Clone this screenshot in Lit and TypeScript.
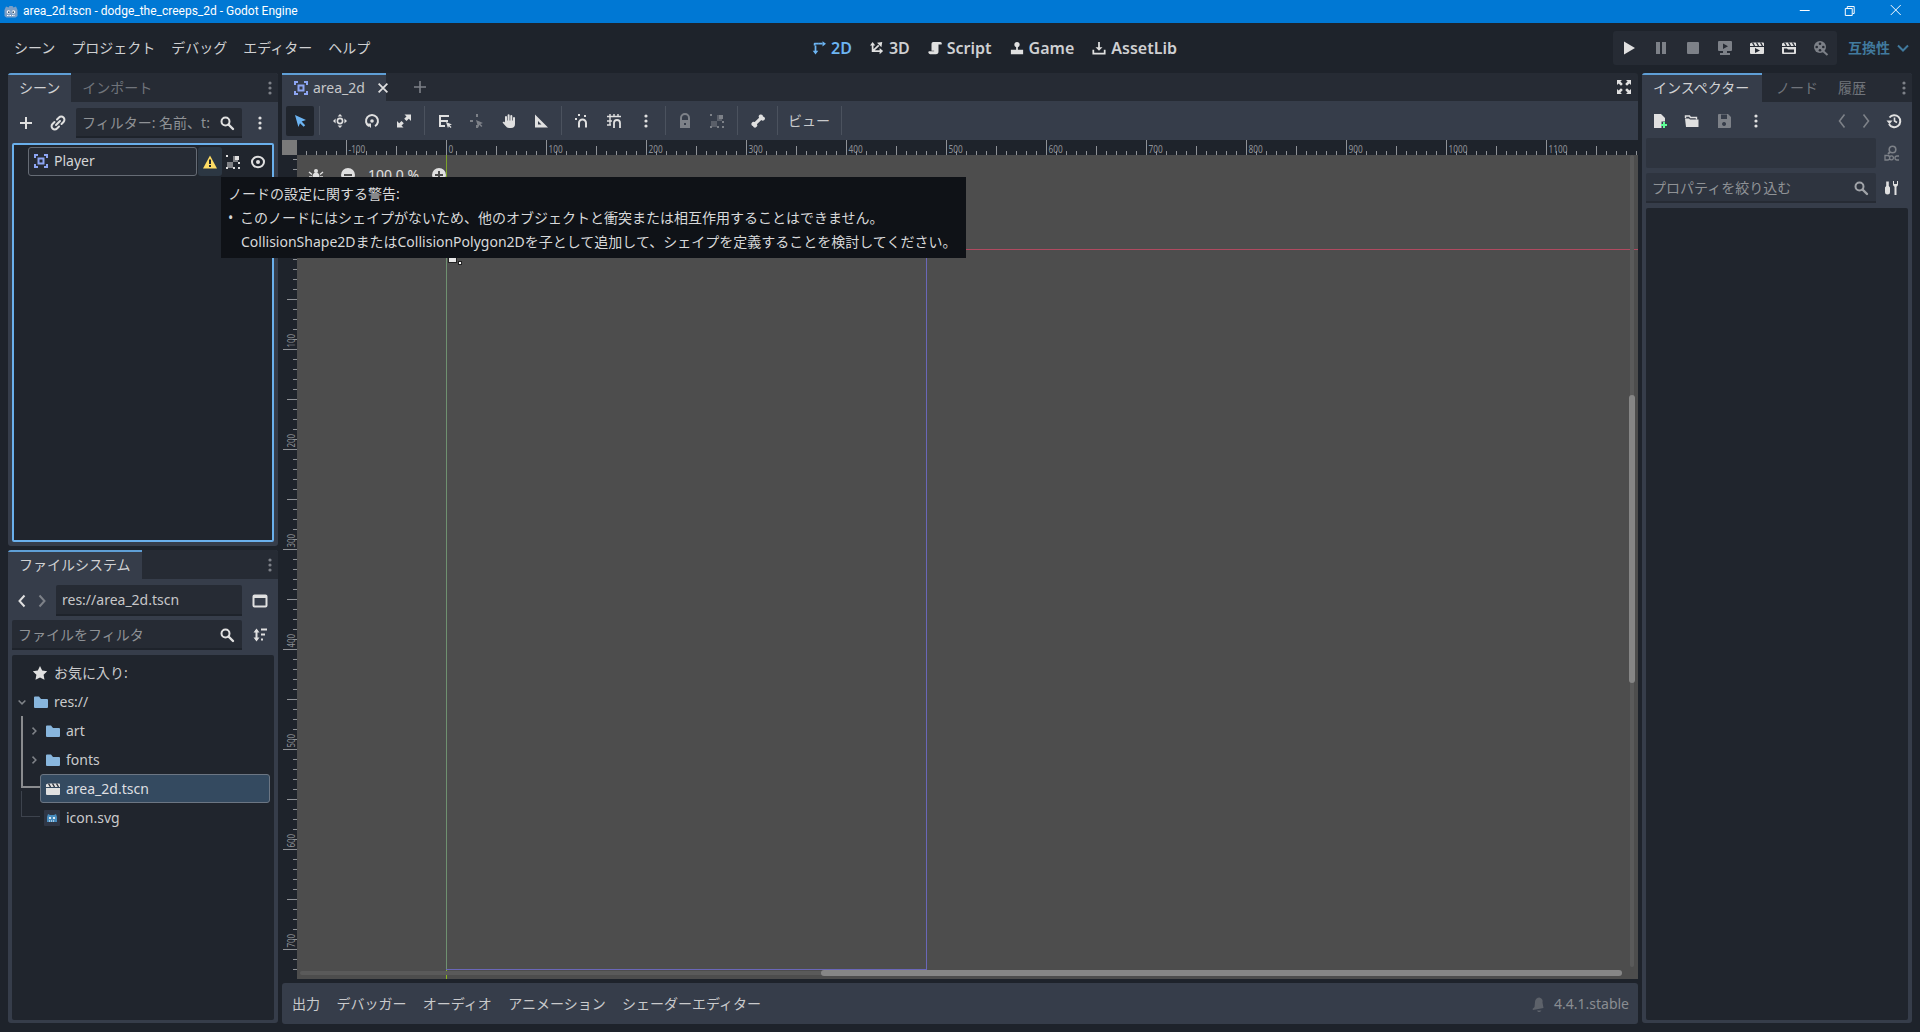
import { LitElement, html, css, svg } from 'lit';
import { customElement } from 'lit/decorators.js';

const W = '#e0e0e0';
const DIM = '#7d8188';
const BLUE = '#6cb4f2';
const AREA = '#8da5f3';

const dots = (c = W) => svg`<circle cx="8" cy="3" r="1.6" fill=${c}/><circle cx="8" cy="8" r="1.6" fill=${c}/><circle cx="8" cy="13" r="1.6" fill=${c}/>`;
const glass = (c = W) => svg`<circle cx="6.5" cy="6.5" r="4" fill="none" stroke=${c} stroke-width="2"/><path d="M9.5 9.5l4.5 4.5" stroke=${c} stroke-width="2.4" stroke-linecap="round"/>`;
const folder = (c = '#88b6dd') => svg`<path d="M1 3.5a1 1 0 0 1 1-1h4l2 2.5h6a1 1 0 0 1 1 1v7a1 1 0 0 1-1 1H2a1 1 0 0 1-1-1z" fill=${c}/>`;
const clap = (c = W) => svg`<path d="M1 3.5l2-1h11a1 1 0 0 1 1 1V6H1z" fill=${c}/><path d="M3.5 2.5l2 3.5M7.5 2.5l2 3.5M11.5 2.5l2 3.5" stroke="#2a303a" stroke-width="1.4"/><path d="M1 7h14v6a1 1 0 0 1-1 1H2a1 1 0 0 1-1-1z" fill=${c}/>`;
const pixels = (c = W) => svg`<path d="M8 2h5v6H8zM2 8h6v6H2z" fill=${c} opacity=".5"/><path d="M1 1h2v2H1zM10 2h4v4h-4zM13 8h2v2h-2zM1 13h2v2H1zM8 13h2v2H8zM13 13h2v2h-2z" fill=${c}/>`;

const ICONS: Record<string, unknown> = {
  area: svg`<path d="M1 1h4v2H3v2H1zM11 1h4v4h-2V3h-2zM1 11h2v2h2v2H1zM13 11h2v4h-4v-2h2z" fill=${AREA}/><path d="M5.5 5.5h5v5h-5z" fill="none" stroke=${AREA} stroke-width="2"/>`,
  close: svg`<path d="M3 3l10 10M13 3L3 13" stroke=${W} stroke-width="2"/>`,
  plus: svg`<path d="M8 2v12M2 8h12" stroke=${W} stroke-width="2"/>`,
  plusdim: svg`<path d="M8 2v12M2 8h12" stroke=${DIM} stroke-width="1.6"/>`,
  link: svg`<path d="M7 4.5l2-2a2.8 2.8 0 0 1 4.5 4.5l-2 2M9 11.5l-2 2A2.8 2.8 0 0 1 2.5 9l2-2M6 10l4-4" fill="none" stroke=${W} stroke-width="2" stroke-linecap="round"/>`,
  dots: dots(),
  dotsdim: dots(DIM),
  search: glass(),
  searchdim: glass('#a0a3a8'),
  warn: svg`<path d="M8 1.5L15 14.5H1z" fill="#ffdd65"/><path d="M7 5.5h2V10H7zM7 11h2v2H7z" fill="#23282f"/>`,
  group: pixels(),
  groupdim: pixels(DIM),
  eye: svg`<ellipse cx="8" cy="8" rx="6" ry="5.2" fill="none" stroke=${W} stroke-width="2"/><circle cx="8" cy="8" r="2" fill=${W}/>`,
  select: svg`<path d="M3 2l11 5-4.400 1.600 3.600 3.600-1.600 1.600-3.600-3.600L6.400 14z" fill=${BLUE}/>`,
  move: svg`<path d="M8 1L5.600 3.600h4.800zM8 15l-2.400-2.600h4.800zM1 8l2.600-2.400v4.800zM15 8l-2.600-2.400v4.800z" fill=${W}/><circle cx="8" cy="8" r="2.600" fill="none" stroke=${W} stroke-width="1.600"/>`,
  rotate: svg`<path d="M5 13.200A6 6 0 1 1 11 13.200" fill="none" stroke=${W} stroke-width="2"/><path d="M2 10.500h5v4.500z" fill=${W}/><circle cx="8" cy="8" r="1.800" fill=${W}/>`,
  scale: svg`<path d="M8.500 1.500H15v6.500l-2.200-2.200-2.300 2.300-2.300-2.300 2.300-2.300zM7.500 14.500H1V8l2.200 2.200 2.300-2.300 2.300 2.300-2.300 2.300z" fill=${W}/>`,
  list: svg`<path d="M2 2h10v2H4v3h7v2H4v3h4v2H2z" fill=${W}/><path d="M9 9l6 2.500-2.300.8 1.800 1.800-.9.9-1.800-1.800-.8 2z" fill=${W}/>`,
  smart: svg`<path d="M7 1h2v3H7zM7 12h2v3H7zM1 7h3v2H1z" fill=${DIM}/><path d="M7 7l7 3-2.600 1 2 2-1.100 1.100-2-2-1 2.600z" fill=${DIM}/>`,
  hand: svg`<path d="M5 8.500V4M7.600 7.500V2.200M10.300 7.500V3M13 8.500V5" stroke=${W} stroke-width="2" stroke-linecap="round"/><path d="M4 7.500h10V11a4 4 0 0 1-4 4H8a4 4 0 0 1-3.400-1.900L1.500 9.500 3 8.500 4 9.500z" fill=${W}/>`,
  ruler: svg`<path fill-rule="evenodd" d="M2 1.500L15 14.500H2zM5 8v3.500h3.500z" fill=${W}/>`,
  snap: svg`<path d="M5 14.500V10a3.500 3.500 0 0 1 7 0v4.500" fill="none" stroke=${W} stroke-width="2"/><path d="M1 5h2v2H1zM4 1h2v2H4zM10 2h2v2h-2z" fill=${W}/>`,
  grid: svg`<path d="M4 1v11M8 1v3M12 1v3M1 3.500h14M1 8h5M1 12h4" stroke=${W} stroke-width="1.400" fill="none"/><path d="M8 15v-5a2.800 2.800 0 0 1 6 0v5" fill="none" stroke=${W} stroke-width="1.800"/>`,
  lock: svg`<path d="M4 7V5a4 4 0 0 1 8 0v2" fill="none" stroke=${DIM} stroke-width="2"/><path fill-rule="evenodd" d="M3 7h10v8H3zM7 10v2h2v-2z" fill=${DIM}/>`,
  bone: svg`<path d="M11 1.500a2 2 0 0 1 2 2 2 2 0 0 1 1 3.700 2 2 0 0 1-2.700-.3L6.900 11.300a2 2 0 0 1-.6 2.800 2 2 0 0 1-3.300-1.100 2 2 0 0 1-1.100-3.300 2 2 0 0 1 2.800-.6L9.100 4.700A2 2 0 0 1 11 1.500z" fill=${W}/>`,
  expand: svg`<path d="M1 1h5L4.400 2.600l2.400 2.400-1.800 1.800-2.400-2.400L1 6zM15 1v5l-1.600-1.600-2.400 2.400-1.800-1.800 2.400-2.400L10 1zM1 15v-5l1.600 1.600 2.400-2.400 1.800 1.800-2.400 2.400L6 15zM15 15h-5l1.600-1.600-2.400-2.400 1.800-1.800 2.400 2.400L15 10z" fill=${W}/>`,
  m2d: svg`<path d="M4 5v7M7 3h5" stroke=${BLUE} stroke-width="2" fill="none"/><path d="M4 4h3V2H3a1 1 0 0 0-1 1v2h2z" fill=${BLUE}/><path d="M.8 11h6.400L4 15.500zM12 .2l4 3-4 3z" fill=${BLUE}/>`,
  m3d: svg`<path d="M3 4v7.500h9M3 11.500L10 5" stroke=${W} stroke-width="2" fill="none"/><path d="M0 5l3-4 3 4zM11 8l4 3.500-4 3.500zM8 2l6-1-1 6z" fill=${W}/>`,
  script: svg`<path d="M6 1h8a2 2 0 0 1 1.500 3H12v8a3 3 0 0 1-3 3H2.500a2 2 0 0 1-1.500-3.400h6V11H4V3a2 2 0 0 1 2-2z" fill=${W}/>`,
  game: svg`<circle cx="8" cy="4" r="3" fill=${W}/><path d="M7 6h2v5H7zM1 10h14v5H1z" fill=${W}/>`,
  asset: svg`<path d="M7 1h2v6h3l-4 4-4-4h3z" fill=${W}/><path d="M1.500 10v4.500h13V10" fill="none" stroke=${W} stroke-width="2"/>`,
  play: svg`<path d="M3 1.500l11 6.500-11 6.500z" fill=${W}/>`,
  pause: svg`<path d="M3 2h4v12H3zM9 2h4v12H9z" fill=${DIM}/>`,
  stop: svg`<rect x="2" y="2" width="12" height="12" rx="1" fill=${DIM}/>`,
  remote: svg`<path fill-rule="evenodd" d="M1 2a1 1 0 0 1 1-1h12a1 1 0 0 1 1 1v8a1 1 0 0 1-1 1h-4v2h3v2H3v-2h3v-2H2a1 1 0 0 1-1-1zM6 3.500v5.500l5-2.700z" fill=${DIM}/>`,
  playscene: svg`${clap()}<path d="M6 8l5 2.500L6 13z" fill="#262b34"/>`,
  customscene: svg`${clap()}<path d="M3 8.500h3l1 1h6v3H3z" fill="#262b34"/>`,
  movie: svg`<circle cx="7" cy="7" r="6" fill=${DIM}/><circle cx="7" cy="3.700" r="1.300" fill="#262b34"/><circle cx="7" cy="10.300" r="1.300" fill="#262b34"/><circle cx="3.700" cy="7" r="1.300" fill="#262b34"/><circle cx="10.300" cy="7" r="1.300" fill="#262b34"/><path d="M10 11l4.500 4" stroke=${DIM} stroke-width="2"/>`,
  chevdown: svg`<path d="M3 5.500l5 5 5-5" fill="none" stroke="#417a9e" stroke-width="2"/>`,
  left: svg`<path d="M10.500 2.500L5.500 8l5 5.500" fill="none" stroke=${W} stroke-width="2"/>`,
  right: svg`<path d="M5.500 2.500l5 5.500-5 5.500" fill="none" stroke=${DIM} stroke-width="2"/>`,
  leftdim: svg`<path d="M10.500 1.500L5.500 8l5 6.500" fill="none" stroke=${DIM} stroke-width="1.600"/>`,
  rightdim: svg`<path d="M5.500 1.500l5 6.500-5 6.500" fill="none" stroke=${DIM} stroke-width="1.600"/>`,
  layout: svg`<rect x="1.500" y="2.500" width="13" height="11" rx="1" fill="none" stroke=${W} stroke-width="2"/><path d="M1.500 2.500h13V5h-13z" fill=${W}/>`,
  sort: svg`<path d="M4.500 3v10" stroke=${W} stroke-width="2"/><path d="M1.500 5.500l3-4 3 4zM1.500 10.500l3 4 3-4z" fill=${W}/><path d="M9 2.500h6M9 7.500h4M9 12.500h2" stroke=${W} stroke-width="1.800"/>`,
  star: svg`<path d="M8 1l2.200 4.600 5 .7-3.600 3.500.9 5L8 12.400l-4.500 2.400.9-5L.8 6.300l5-.7z" fill=${W}/>`,
  folder: folder(),
  downarrow: svg`<path d="M3.500 6l4.500 4.500L12.500 6" fill="none" stroke="#7f8388" stroke-width="2"/>`,
  rightarrow: svg`<path d="M6 3.500L10.500 8 6 12.500" fill="none" stroke="#7f8388" stroke-width="2"/>`,
  scene: clap(),
  godot: svg`<rect width="16" height="16" rx="1" fill="#2f3645"/><path d="M3 7l1-3 2 1h4l2-1 1 3v5H3z" fill="#478cbf"/><circle cx="6" cy="8" r="1.100" fill="#fff"/><circle cx="10" cy="8" r="1.100" fill="#fff"/><path d="M5 11h6" stroke="#fff" stroke-dasharray="1 1"/>`,
  wingodot: svg`<path d="M1.500 6L3 2.500l2.500 1L6.500 2h3l1 1.500 2.500-1L14.500 6v6l-2 1.500h-9L1.500 12z" fill="#7b9fc7"/><circle cx="5.500" cy="8" r="1.800" fill="#fff"/><circle cx="10.500" cy="8" r="1.800" fill="#fff"/><circle cx="5.800" cy="8.200" r=".9" fill="#33506e"/><circle cx="10.200" cy="8.200" r=".9" fill="#33506e"/><path d="M4 11.500h8" stroke="#fff" stroke-dasharray="1.500 1"/>`,
  newres: svg`<path d="M2 1h7l4 4v3.500H9.500V12H2zM2 12h7.500v3H2z" fill=${W}/><path d="M12 9v6M9 12h6" stroke="#5fff97" stroke-width="2"/>`,
  open: svg`<path d="M1.500 5V3h4l1 1.500h6v2" fill="none" stroke=${W} stroke-width="1.400"/><path d="M1 5.500L2 14h12.500V6.500H6L5 5.500z" fill=${W}/>`,
  save: svg`<path fill-rule="evenodd" d="M2 2a1 1 0 0 1 1-1h9l3 3v10a1 1 0 0 1-1 1H2zM5 1.500V6h6V1.500zM8 9a2 2 0 1 0 .1 0z" fill=${DIM}/>`,
  hist: svg`<path d="M3.500 4.500A6 6 0 1 1 3 11" fill="none" stroke=${W} stroke-width="2"/><path d="M.5 7.500h6l-3 3.800z" fill=${W}/><path d="M8.500 4.500V8l2.500 1.500" fill="none" stroke=${W} stroke-width="1.600"/>`,
  doc: svg`<circle cx="8.500" cy="4.500" r="3.300" fill="none" stroke=${DIM} stroke-width="1.600"/><path d="M6 7L4 9" stroke=${DIM} stroke-width="1.800"/><path d="M1 10.500h2.500a2 2 0 0 1 0 4.500H1zM7.500 10.800a2 2 0 1 1-.1 0zM15 11h-2a2 2 0 0 0 0 4h2" fill="none" stroke=${DIM} stroke-width="1.300"/>`,
  tools: svg`<path d="M1 7.500l1.200-1.500V1.500h2.600V6L6 7.500V12a2.500 2.500 0 0 1-5 0z" fill=${W}/><path d="M9 1v3.500a2.500 2.500 0 0 0 1.500 2.200V15h2V6.700A2.500 2.500 0 0 0 14 4.500V1h-1v3h-3V1z" fill=${W}/>`,
  bell: svg`<path d="M9.500 1.500a4 4 0 0 1 3 5l1 5.500-10.500 2-.5-1 2-2 .5-5a4.500 4.500 0 0 1 4.500-4.500zM7 14.500h4.500L10 16H8z" fill="#5d626a"/>`,
  bug: svg`<ellipse cx="8" cy="10" rx="3.500" ry="4.500" fill=${W}/><circle cx="8" cy="4" r="2" fill=${W}/><path d="M1 5l3 2.500M15 5l-3 2.500M1 10h3M15 10h-3M2 15l3-2M14 15l-3-2" stroke=${W} stroke-width="1.400"/>`,
  minus: svg`<circle cx="8" cy="8" r="7" fill=${W}/><path d="M4 7h8v2H4z" fill="#4d4d4d"/>`,
  zoomplus: svg`<circle cx="8" cy="8" r="7" fill=${W}/><path d="M7 4h2v3h3v2H9v3H7V9H4V7h3z" fill="#4d4d4d"/>`,
};

const icon = (name: string, size = 16) =>
  html`<svg class="icon" width=${size} height=${size} viewBox="0 0 16 16">${ICONS[name]}</svg>`;

const btn = (name: string, size = 16) => html`<span class="btn">${icon(name, size)}</span>`;

@customElement('app-root')
export class AppRoot extends LitElement {
  static styles = css`
    :host {
      display: block;
      width: 1920px;
      height: 1032px;
      overflow: hidden;
      background: #1e232b;
      color: #d4d5d7;
      font-family: 'Noto Sans', 'Noto Sans CJK JP', sans-serif;
      font-size: 14px;
      line-height: 20px;
      position: relative;
    }
    .icon { display: block; flex: none; }
    .btn { display: flex; flex: none; width: 32px; align-items: center; justify-content: center; }

    .titlebar { height: 23px; background: #0078d4; color: #fff; display: flex; align-items: center; font-family: Roboto, 'Noto Sans', sans-serif; font-size: 12px; padding-left: 3px; }
    .titlebar .name { margin-left: 4px; line-height: 23px; }
    .winctl { margin-left: auto; display: flex; height: 23px; padding-right: 2px; }
    .winctl svg { display: block; width: 45.5px; height: 23px; }

    .menubar { height: 50px; display: flex; align-items: center; }
    .menus { width: 812px; flex: none; padding-left: 14px; box-sizing: border-box; display: flex; gap: 16px; color: #cfd0d2; }
    .modes { display: flex; gap: 18px; font-weight: 600; font-size: 16px; color: #cfd0d2; }
    .mode { display: flex; align-items: center; gap: 5px; }
    .mode.on { color: #6cb4f2; }
    .runbar { margin-left: auto; width: 224px; height: 34px; background: #262b34; border-radius: 3px; display: flex; align-items: center; }
    .compat { width: 83px; display: flex; align-items: center; padding-left: 11px; box-sizing: border-box; color: #417a9e; font-weight: 600; gap: 5px; }

    .main { display: grid; grid-template-columns: 270px 1356px 270px; gap: 4px; padding: 0 8px; height: 951px; box-sizing: border-box; }
    .col { display: flex; flex-direction: column; min-height: 0; }
    .dock { background: #363d4a; border-radius: 3px; display: flex; flex-direction: column; overflow: hidden; }
    .scene { height: 473px; flex: none; }
    .fs { height: 473px; flex: none; margin-top: 4px; }
    .insp { height: 950px; }

    .tabs { height: 29px; flex: none; background: #262b34; display: flex; color: #70747b; }
    .tab { display: flex; align-items: center; box-sizing: border-box; border-top: 2px solid transparent; padding: 0 11px 2px; }
    .tab.on { background: #363d4a; border-top-color: #5f9fd6; color: #d0d1d3; }
    .tabs .more { margin-left: auto; width: 16px; align-self: center; }

    .row { display: flex; align-items: center; flex: none; }
    .input { background: #262b34; border-bottom: 2px solid #1e232b; box-sizing: border-box; border-radius: 2px 2px 0 0; display: flex; align-items: center; color: #8f9296; padding: 0 7px; overflow: hidden; white-space: nowrap; }
    .input .txt { flex: 1; overflow: hidden; }
    .input .icon { margin-left: 4px; }
    .scene .row { height: 41px; padding: 0 2px; }
    .filter { width: 166px; height: 30px; margin: 1px 2px 0; padding: 2px 7px 0 6px; }
    .tree { background: #20252d; flex: 1; position: relative; }
    .scene .tree { margin: 0 4px 4px; border: 2px solid #6ab0ec; border-radius: 2px; }
    .node { position: absolute; left: 14px; top: 2px; width: 169px; height: 29px; box-sizing: border-box; border: 1px solid #666c75; border-radius: 3px; background: #262b34; display: flex; align-items: center; padding: 0 0 1px 4px; gap: 5px; }
    .nodeicons { position: absolute; left: 184px; top: 2px; height: 29px; display: flex; align-items: center; }
    .warnbtn { width: 24px; height: 29px; background: #2c3743; border-radius: 3px; display: flex; align-items: center; justify-content: center; }
    .nodeicons .g { margin-left: 3px; }
    .nodeicons .e { margin-left: 9px; }

    .fs .nav { padding: 6px 2px 0 4px; height: 31px; box-sizing: content-box; }
    .navbtn { width: 20px; display: flex; justify-content: center; }
    .path { width: 186px; height: 31px; color: #c6c7c9; margin: 0 2px 0 4px; padding: 0 6px; }
    .fs .search { margin: 4px 2px 0 4px; height: 30px; }
    .fsfilter { width: 230px; height: 30px; margin-right: 2px; padding: 2px 7px 0 6px; }
    .fs .tree { margin: 5px 4px 3px; padding-top: 3px; border-radius: 2px; }
    .item { height: 29px; display: flex; align-items: center; white-space: nowrap; color: #c9cacc; position: relative; z-index: 1; }
    .item .icon { margin-right: 5px; }
    .item .slot { width: 12px; flex: none; display: flex; justify-content: center; margin-right: 5px; }
    .item .slot .icon { margin: 0; }
    .i0 { padding-left: 20px; }
    .i0 .icon { margin-right: 6px; }
    .i1 { padding-left: 4px; }
    .i2 { padding-left: 16px; }
    .i3 { padding-left: 32px; }
    .i3 .icon { margin-right: 6px; }
    .item.sel { margin-left: 28px; margin-right: 4px; padding-left: 4px; background: #344a60; border: 1px solid #6c7683; border-radius: 3px; box-sizing: border-box; color: #dedfe1; }
    .line { position: absolute; }
    .l1 { left: 9px; top: 61px; width: 2px; height: 72px; background: #8a8c8f; }
    .l2 { left: 9px; top: 131px; width: 19px; height: 2px; background: #8a8c8f; }
    .l3 { left: 9px; top: 136px; width: 1px; height: 26px; background: #3d434d; }
    .l4 { left: 9px; top: 161px; width: 19px; height: 1px; background: #3d434d; }

    .center { display: flex; flex-direction: column; min-height: 0; }
    .ctabs { height: 28px; flex: none; background: #262b34; border-radius: 3px 3px 0 0; display: flex; align-items: stretch; }
    .ctab { width: 104px; box-sizing: border-box; background: #363d4a; border-top: 2px solid #5f9fd6; display: flex; align-items: center; padding-left: 11px; gap: 4px; color: #c6c7c9; }
    .ctab .x { margin-left: 7px; }
    .addtab { width: 32px; margin-left: 18px; display: flex; align-items: center; justify-content: center; }
    .full { margin-left: auto; width: 24px; display: flex; align-items: center; justify-content: center; margin-right: 2px; }
    .ctools { height: 39px; flex: none; background: #363d4a; display: flex; align-items: center; padding-left: 4px; }
    .selbtn { width: 28px; height: 30px; background: #20252d; border-radius: 2px; display: flex; align-items: center; justify-content: center; flex: none; }
    .sep { width: 1px; height: 29px; background: #4b525e; flex: none; margin: 0 4px; }
    .sep.first { margin-left: 5px; }
    .sep.thin { margin: 0 3px; }
    .view { width: 56px; flex: none; text-align: center; color: #c9cacc; }

    .canvas { height: 839px; flex: none; position: relative; display: grid; grid-template-columns: 15px 1fr; grid-template-rows: 15px 1fr; background: #1e232b; overflow: hidden; }
    .corner { background: #7a7a7a; }
    .ruler { display: block; }
    .ruler text { font-size: 11px; fill: #8e9196; font-family: 'Noto Sans', sans-serif; }
    .vp { background: #4d4d4d; position: relative; overflow: hidden; }
    .vline { position: absolute; width: 1px; }
    .hline { position: absolute; height: 1px; }
    .g1 { left: 149px; top: 0; height: 94px; background: #7ba32a; }
    .g2 { left: 149px; top: 94px; height: 720px; background: #6f9170; }
    .g3 { left: 149px; top: 814px; bottom: 0; background: #8ab820; }
    .b1 { left: 629px; top: 94px; height: 720px; background: #6a67b8; }
    .b2 { left: 149px; top: 814px; width: 481px; background: #6a67b8; }
    .r1 { left: 0; right: 0; top: 94px; background: #b04a60; }
    .zoom { position: absolute; left: 11px; top: 10px; display: flex; align-items: center; color: #e0e0e0; }
    .zoom .pct { width: 75px; text-align: center; }
    .zoom .m { margin-left: 16px; }
    .handle { position: absolute; left: 151px; top: 100px; width: 9px; height: 8px; background: #e8e8e8; border: 1px solid #222; box-sizing: border-box; }
    .handle2 { position: absolute; left: 161px; top: 106px; width: 4px; height: 4px; background: #fff; border: 1px solid #222; box-sizing: border-box; }
    .vtrack { position: absolute; right: 4px; top: 0; bottom: 12px; width: 4px; background: #5a5a5a; border-radius: 2px; }
    .vthumb { position: absolute; left: -1px; width: 6px; top: 240px; height: 288px; background: #868686; border-radius: 3px; }
    .htrack { position: absolute; left: 3px; right: 16px; bottom: 4px; height: 4px; background: #5a5a5a; border-radius: 2px; }
    .hthumb { position: absolute; left: 521px; right: 0; top: -1px; height: 6px; background: #868686; border-radius: 3px; }

    .bottom { height: 41px; margin-top: 4px; flex: none; background: #363d4a; border-radius: 3px; display: flex; align-items: center; padding: 1px 9px 0 10px; box-sizing: border-box; gap: 16.4px; color: #c9cacc; }
    .ver { margin-left: auto; display: flex; align-items: center; gap: 8px; color: #8a8d92; }

    .insp .tabs .a { width: 120px; margin-right: 4px; }
    .insp .tabs .tab { padding: 0 10px 2px; }
    .insp .tabs .tab.a { padding: 0 11px 2px; }
    .itools { height: 36px; padding: 2px 2px 0; box-sizing: border-box; }
    .itools .sp { margin-left: auto; width: 24px; display: flex; justify-content: center; }
    .itools .spb { width: 24px; display: flex; justify-content: center; }
    .irow { height: 30px; padding: 0 2px 0 4px; }
    .irow.two { margin-top: 5px; }
    .blank { width: 230px; height: 30px; background: #2e343f; border-radius: 2px; flex: none; }
    .pfilter { width: 230px; height: 30px; background: #2e343f; border-bottom-color: #262b34; padding: 2px 7px 0 6px; }
    .insp .tree { margin: 5px 4px 3px; border-radius: 2px; }

    .tip { position: absolute; left: 221px; top: 177px; width: 745px; height: 81px; background: #0f1217; box-sizing: border-box; padding: 5px 7px; color: #d8d9da; white-space: nowrap; z-index: 5; font-size: 14px; line-height: 24px; }
    .tip .li { display: flex; }
    .tip .bul { width: 12px; flex: none; }
    .tip .cont { padding-left: 13px; }
  `;

  private hRuler() {
    const t = [];
    for (let x = 446 - 140; x < 1640; x += 10) {
      const px = x - 296.5;
      const u = x - 446;
      const major = u % 100 === 0;
      const mid = u % 50 === 0;
      const y1 = major ? 0 : mid ? 6 : 11;
      t.push(svg`<path d=${`M${px} ${y1}V15`} stroke="#8e9196"/>`);
      if (major) t.push(svg`<text transform=${`translate(${px + 2} 13) scale(.75 1)`}>${u}</text>`);
    }
    return html`<svg class="ruler" width="1341" height="15">${t}</svg>`;
  }

  private vRuler() {
    const t = [];
    for (let y = 250 - 90; y < 980; y += 10) {
      const py = y - 155 - 0.5;
      const u = y - 250;
      const major = u % 100 === 0;
      const mid = u % 50 === 0;
      const x1 = major ? 1 : mid ? 5 : 11;
      t.push(svg`<path d=${`M${x1} ${py}H15`} stroke="#8e9196"/>`);
      if (major) t.push(svg`<text transform=${`translate(13 ${py - 2}) rotate(-90) scale(.72 1)`}>${u}</text>`);
    }
    return html`<svg class="ruler" width="15" height="824">${t}</svg>`;
  }

  render() {
    return html`
      <div class="titlebar">
        ${icon('wingodot')}
        <span class="name">area_2d.tscn - dodge_the_creeps_2d - Godot Engine</span>
        <div class="winctl">
          <svg viewBox="0 0 46 23"><path d="M18 10.500h10" stroke="#fff"/></svg>
          <svg viewBox="0 0 46 23"><path d="M18.500 8.500h7v7h-7zM20.500 8V6.500h7v7H26" fill="none" stroke="#fff"/></svg>
          <svg viewBox="0 0 46 23"><path d="M18 5l10 10M28 5L18 15" stroke="#fff"/></svg>
        </div>
      </div>

      <div class="menubar">
        <div class="menus">
          <span>シーン</span><span>プロジェクト</span><span>デバッグ</span><span>エディター</span><span>ヘルプ</span>
        </div>
        <div class="modes">
          <span class="mode on">${icon('m2d', 14)}2D</span>
          <span class="mode">${icon('m3d', 14)}3D</span>
          <span class="mode">${icon('script', 14)}Script</span>
          <span class="mode">${icon('game', 14)}Game</span>
          <span class="mode">${icon('asset', 14)}AssetLib</span>
        </div>
        <div class="runbar">
          ${['play', 'pause', 'stop', 'remote', 'playscene', 'customscene', 'movie'].map((n) => btn(n))}
        </div>
        <div class="compat"><span>互換性</span>${icon('chevdown')}</div>
      </div>

      <div class="main">
        <div class="col">
          <section class="dock scene">
            <div class="tabs">
              <div class="tab on">シーン</div>
              <div class="tab">インポート</div>
              <span class="more">${icon('dotsdim', 16)}</span>
            </div>
            <div class="row">
              ${btn('plus')}${btn('link')}
              <div class="input filter"><span class="txt">フィルター: 名前、t:</span>${icon('search')}</div>
              ${btn('dots')}
            </div>
            <div class="tree">
              <div class="node">${icon('area')}<span>Player</span></div>
              <div class="nodeicons">
                <span class="warnbtn">${icon('warn')}</span>
                <span class="g">${icon('group')}</span>
                <span class="e">${icon('eye')}</span>
              </div>
            </div>
          </section>

          <section class="dock fs">
            <div class="tabs">
              <div class="tab on">ファイルシステム</div>
              <span class="more">${icon('dotsdim', 16)}</span>
            </div>
            <div class="row nav">
              <span class="navbtn">${icon('left')}</span><span class="navbtn">${icon('right')}</span>
              <div class="input path"><span class="txt">res://area_2d.tscn</span></div>
              ${btn('layout')}
            </div>
            <div class="row search">
              <div class="input fsfilter"><span class="txt">ファイルをフィルタ</span>${icon('search')}</div>
              ${btn('sort')}
            </div>
            <div class="tree">
              <div class="item i0">${icon('star')}<span>お気に入り:</span></div>
              <div class="item i1"><span class="slot">${icon('downarrow', 12)}</span>${icon('folder')}<span>res://</span></div>
              <div class="item i2"><span class="slot">${icon('rightarrow', 12)}</span>${icon('folder')}<span>art</span></div>
              <div class="item i2"><span class="slot">${icon('rightarrow', 12)}</span>${icon('folder')}<span>fonts</span></div>
              <div class="item sel">${icon('scene')}<span>area_2d.tscn</span></div>
              <div class="item i3">${icon('godot')}<span>icon.svg</span></div>
              <span class="line l1"></span><span class="line l2"></span><span class="line l3"></span><span class="line l4"></span>
            </div>
          </section>
        </div>

        <div class="center">
          <div class="ctabs">
            <div class="ctab">${icon('area')}<span>area_2d</span><span class="x">${icon('close', 14)}</span></div>
            <span class="addtab">${icon('plusdim')}</span>
            <span class="full">${icon('expand')}</span>
          </div>
          <div class="ctools">
            <span class="selbtn">${icon('select')}</span>
            <span class="sep first"></span>
            ${btn('move')}${btn('rotate')}${btn('scale')}
            <span class="sep"></span>
            ${btn('list')}${btn('smart')}${btn('hand')}${btn('ruler')}
            <span class="sep"></span>
            ${btn('snap')}${btn('grid')}${btn('dots')}
            <span class="sep thin"></span>
            ${btn('lock')}${btn('groupdim')}
            <span class="sep"></span>
            ${btn('bone')}
            <span class="sep thin"></span>
            <span class="view">ビュー</span>
            <span class="sep"></span>
          </div>
          <div class="canvas">
            <div class="corner"></div>
            ${this.hRuler()}
            ${this.vRuler()}
            <div class="vp">
              <span class="vline g1"></span><span class="vline g2"></span><span class="vline g3"></span>
              <span class="hline r1"></span>
              <span class="vline b1"></span><span class="hline b2"></span>
              <div class="zoom">
                ${icon('bug')}
                <span class="m">${icon('minus')}</span>
                <span class="pct">100.0 %</span>
                ${icon('zoomplus')}
              </div>
              <span class="handle"></span><span class="handle2"></span>
              <div class="vtrack"><div class="vthumb"></div></div>
              <div class="htrack"><div class="hthumb"></div></div>
            </div>
          </div>
          <div class="bottom">
            <span>出力</span><span>デバッガー</span><span>オーディオ</span><span>アニメーション</span><span>シェーダーエディター</span>
            <span class="ver">${icon('bell')}4.4.1.stable</span>
          </div>
        </div>

        <div class="col">
          <section class="dock insp">
            <div class="tabs">
              <div class="tab on a">インスペクター</div>
              <div class="tab">ノード</div>
              <div class="tab">履歴</div>
              <span class="more">${icon('dotsdim', 16)}</span>
            </div>
            <div class="row itools">
              ${btn('newres')}${btn('open')}${btn('save')}${btn('dots')}
              <span class="sp">${icon('leftdim')}</span><span class="spb">${icon('rightdim')}</span>
              ${btn('hist')}
            </div>
            <div class="row irow"><div class="blank"></div>${btn('doc')}</div>
            <div class="row irow two">
              <div class="input pfilter"><span class="txt">プロパティを絞り込む</span>${icon('searchdim')}</div>
              ${btn('tools')}
            </div>
            <div class="tree"></div>
          </section>
        </div>
      </div>

      <div class="tip">
        <div>ノードの設定に関する警告:</div>
        <div class="li"><span class="bul">•</span><span>このノードにはシェイプがないため、他のオブジェクトと衝突または相互作用することはできません。</span></div>
        <div class="cont">CollisionShape2DまたはCollisionPolygon2Dを子として追加して、シェイプを定義することを検討してください。</div>
      </div>
    `;
  }
}
